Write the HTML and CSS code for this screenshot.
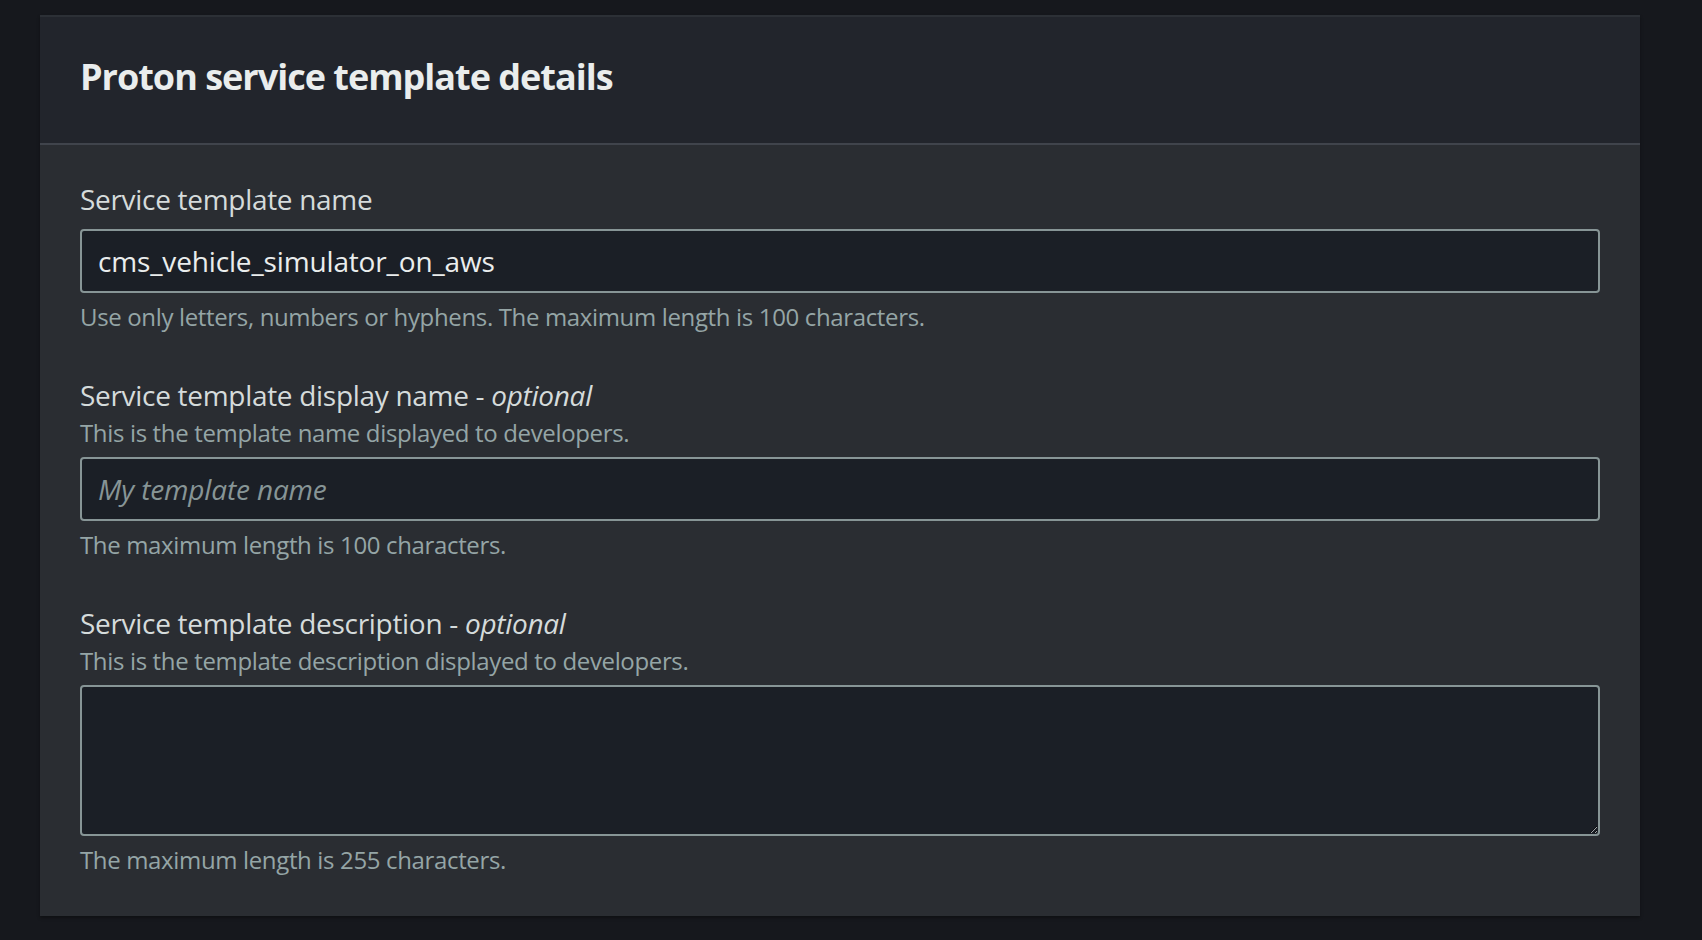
FILE: index.html
```html
<!DOCTYPE html>
<html lang="en">
<head>
<meta charset="utf-8">
<title>Proton service template details</title>
<link rel="stylesheet" href="styles.css">
</head>
<body>
<div class="page">
  <section class="panel">
    <header class="panel-header">
      <h2 class="panel-title">Proton service template details</h2>
    </header>
    <div class="panel-body">
      <div class="field">
        <label class="field-label" for="tpl-name">Service template name</label>
        <input class="text-input" id="tpl-name" type="text" value="cms_vehicle_simulator_on_aws">
        <div class="constraint">Use only letters, numbers or hyphens. The maximum length is 100 characters.</div>
      </div>
      <div class="field">
        <label class="field-label" for="tpl-display">Service template display name - <i>optional</i></label>
        <div class="description">This is the template name displayed to developers.</div>
        <input class="text-input" id="tpl-display" type="text" placeholder="My template name">
        <div class="constraint">The maximum length is 100 characters.</div>
      </div>
      <div class="field">
        <label class="field-label" for="tpl-desc">Service template description - <i>optional</i></label>
        <div class="description">This is the template description displayed to developers.</div>
        <textarea class="text-area" id="tpl-desc"></textarea>
        <div class="constraint">The maximum length is 255 characters.</div>
      </div>
    </div>
  </section>
</div>
</body>
</html>
```
FILE: styles.css
```css
html, body {
  margin: 0;
  padding: 0;
  background: #16181d;
  height: 100%;
}
body {
  font-family: "Open Sans", "Liberation Sans", sans-serif;
  color: #d5dbdb;
}
.page {
  padding: 15px 62px 0 40px;
}
.panel {
  width: 1600px;
  background: #2a2d32;
  border-top: 2px solid #2c3036;
  box-shadow: 0 2px 3px rgba(0, 0, 0, 0.35);
}
.panel-header {
  background: #22252c;
  padding: 36px 40px 42px;
  border-bottom: 2px solid #40444c;
}
.panel-title {
  margin: 0;
  font-size: 36px;
  line-height: 48px;
  font-weight: 700;
  letter-spacing: -1px;
  color: #eaeded;
}
.panel-body {
  padding: 32px 40px 40px;
  display: flex;
  flex-direction: column;
  gap: 40px;
}
.field {
  display: flex;
  flex-direction: column;
}
.field-label {
  font-size: 28px;
  line-height: 44px;
  letter-spacing: -0.3px;
  color: #d5dbdb;
}
.field-label i {
  font-style: italic;
}
.description {
  font-size: 24px;
  line-height: 32px;
  letter-spacing: -0.35px;
  color: #95a5a6;
}
.text-input,
.text-area {
  box-sizing: border-box;
  width: 100%;
  margin: 8px 0 0;
  background: #1b1f26;
  border: 2px solid #879596;
  border-radius: 4px;
  color: #eaeded;
  font-family: inherit;
  font-size: 28px;
  letter-spacing: -0.15px;
  outline: none;
}
.text-input {
  height: 64px;
  padding: 0 16px;
}
.text-input::placeholder {
  color: #879596;
  font-style: italic;
}
.text-area {
  height: 151px;
  padding: 8px 16px;
  resize: vertical;
  color-scheme: dark;
  display: block;
}
.constraint {
  margin-top: 8px;
  font-size: 24px;
  line-height: 32px;
  letter-spacing: -0.35px;
  color: #95a5a6;
}
```
